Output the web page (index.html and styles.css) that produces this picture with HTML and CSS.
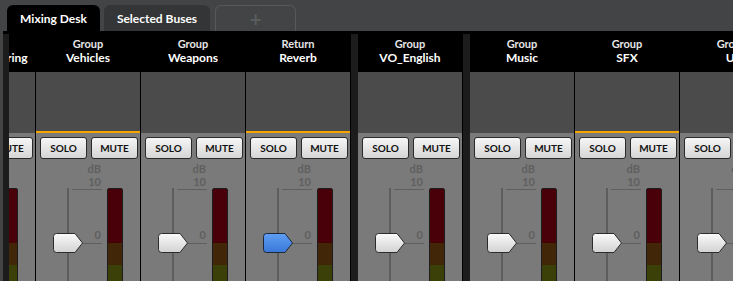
FILE: index.html
```html
<!DOCTYPE html>
<html lang="en">
<head>
    <meta charset="UTF-8">
    <title>Mixing Desk</title>
    <link rel="stylesheet" href="styles.css">
</head>
<body>
    <svg class="svg-defs" width="0" height="0" aria-hidden="true">
        <defs>
            <linearGradient id="knobWhite" x1="0" y1="0" x2="0" y2="1">
                <stop offset="0" stop-color="#fafafa"/>
                <stop offset="1" stop-color="#d2d2d2"/>
            </linearGradient>
            <linearGradient id="knobBlue" x1="0" y1="0" x2="0" y2="1">
                <stop offset="0" stop-color="#5e9ef4"/>
                <stop offset="1" stop-color="#3a78d8"/>
            </linearGradient>
        </defs>
    </svg>

    <nav class="tabs">
        <div class="tab tab-active">Mixing Desk</div>
        <div class="tab tab-buses">Selected Buses</div>
        <div class="tab tab-add">+</div>
    </nav>

    <div class="desk">
        <div class="gutter"></div>
        <div class="viewport">
            <div class="channels">

                <div class="group">
                    <div class="strip">
                        <div class="strip-head"><span class="strip-type">Group</span><span class="strip-name">Crowd_Cheering</span></div>
                        <div class="strip-well"></div>
                        <div class="strip-body">
                            <div class="buttons"><button class="btn">SOLO</button><button class="btn">MUTE</button></div>
                            <div class="fader">
                                <div class="scale-labels">dB<br>10</div>
                                <div class="fader-track">
                                    <span class="tick tick-top"></span>
                                    <span class="tick tick-zero"></span>
                                    <span class="zero-label">0</span>
                                    <svg class="handle" viewBox="0 0 32 22"><path d="M4.5 1.5H23L30.5 11L23 20.5H4.5Q1.5 20.5 1.5 17.5V4.5Q1.5 1.5 4.5 1.5Z" fill="url(#knobWhite)" stroke="#2c2c2c"/></svg>
                                </div>
                                <div class="meter"></div>
                            </div>
                        </div>
                    </div>
                    <div class="strip selected">
                        <div class="strip-head"><span class="strip-type">Group</span><span class="strip-name">Vehicles</span></div>
                        <div class="strip-well"></div>
                        <div class="strip-body">
                            <div class="buttons"><button class="btn">SOLO</button><button class="btn">MUTE</button></div>
                            <div class="fader">
                                <div class="scale-labels">dB<br>10</div>
                                <div class="fader-track">
                                    <span class="tick tick-top"></span>
                                    <span class="tick tick-zero"></span>
                                    <span class="zero-label">0</span>
                                    <svg class="handle" viewBox="0 0 32 22"><path d="M4.5 1.5H23L30.5 11L23 20.5H4.5Q1.5 20.5 1.5 17.5V4.5Q1.5 1.5 4.5 1.5Z" fill="url(#knobWhite)" stroke="#2c2c2c"/></svg>
                                </div>
                                <div class="meter"></div>
                            </div>
                        </div>
                    </div>
                    <div class="strip">
                        <div class="strip-head"><span class="strip-type">Group</span><span class="strip-name">Weapons</span></div>
                        <div class="strip-well"></div>
                        <div class="strip-body">
                            <div class="buttons"><button class="btn">SOLO</button><button class="btn">MUTE</button></div>
                            <div class="fader">
                                <div class="scale-labels">dB<br>10</div>
                                <div class="fader-track">
                                    <span class="tick tick-top"></span>
                                    <span class="tick tick-zero"></span>
                                    <span class="zero-label">0</span>
                                    <svg class="handle" viewBox="0 0 32 22"><path d="M4.5 1.5H23L30.5 11L23 20.5H4.5Q1.5 20.5 1.5 17.5V4.5Q1.5 1.5 4.5 1.5Z" fill="url(#knobWhite)" stroke="#2c2c2c"/></svg>
                                </div>
                                <div class="meter"></div>
                            </div>
                        </div>
                    </div>
                    <div class="strip selected">
                        <div class="strip-head"><span class="strip-type">Return</span><span class="strip-name">Reverb</span></div>
                        <div class="strip-well"></div>
                        <div class="strip-body">
                            <div class="buttons"><button class="btn">SOLO</button><button class="btn">MUTE</button></div>
                            <div class="fader">
                                <div class="scale-labels">dB<br>10</div>
                                <div class="fader-track">
                                    <span class="tick tick-top"></span>
                                    <span class="tick tick-zero"></span>
                                    <span class="zero-label">0</span>
                                    <svg class="handle" viewBox="0 0 32 22"><path d="M4.5 1.5H23L30.5 11L23 20.5H4.5Q1.5 20.5 1.5 17.5V4.5Q1.5 1.5 4.5 1.5Z" fill="url(#knobBlue)" stroke="#1e2836"/></svg>
                                </div>
                                <div class="meter"></div>
                            </div>
                        </div>
                    </div>
                </div>

                <div class="group-gap"></div>

                <div class="group">
                    <div class="strip">
                        <div class="strip-head"><span class="strip-type">Group</span><span class="strip-name">VO_English</span></div>
                        <div class="strip-well"></div>
                        <div class="strip-body">
                            <div class="buttons"><button class="btn">SOLO</button><button class="btn">MUTE</button></div>
                            <div class="fader">
                                <div class="scale-labels">dB<br>10</div>
                                <div class="fader-track">
                                    <span class="tick tick-top"></span>
                                    <span class="tick tick-zero"></span>
                                    <span class="zero-label">0</span>
                                    <svg class="handle" viewBox="0 0 32 22"><path d="M4.5 1.5H23L30.5 11L23 20.5H4.5Q1.5 20.5 1.5 17.5V4.5Q1.5 1.5 4.5 1.5Z" fill="url(#knobWhite)" stroke="#2c2c2c"/></svg>
                                </div>
                                <div class="meter"></div>
                            </div>
                        </div>
                    </div>
                </div>

                <div class="group-gap"></div>

                <div class="group">
                    <div class="strip">
                        <div class="strip-head"><span class="strip-type">Group</span><span class="strip-name">Music</span></div>
                        <div class="strip-well"></div>
                        <div class="strip-body">
                            <div class="buttons"><button class="btn">SOLO</button><button class="btn">MUTE</button></div>
                            <div class="fader">
                                <div class="scale-labels">dB<br>10</div>
                                <div class="fader-track">
                                    <span class="tick tick-top"></span>
                                    <span class="tick tick-zero"></span>
                                    <span class="zero-label">0</span>
                                    <svg class="handle" viewBox="0 0 32 22"><path d="M4.5 1.5H23L30.5 11L23 20.5H4.5Q1.5 20.5 1.5 17.5V4.5Q1.5 1.5 4.5 1.5Z" fill="url(#knobWhite)" stroke="#2c2c2c"/></svg>
                                </div>
                                <div class="meter"></div>
                            </div>
                        </div>
                    </div>
                    <div class="strip selected">
                        <div class="strip-head"><span class="strip-type">Group</span><span class="strip-name">SFX</span></div>
                        <div class="strip-well"></div>
                        <div class="strip-body">
                            <div class="buttons"><button class="btn">SOLO</button><button class="btn">MUTE</button></div>
                            <div class="fader">
                                <div class="scale-labels">dB<br>10</div>
                                <div class="fader-track">
                                    <span class="tick tick-top"></span>
                                    <span class="tick tick-zero"></span>
                                    <span class="zero-label">0</span>
                                    <svg class="handle" viewBox="0 0 32 22"><path d="M4.5 1.5H23L30.5 11L23 20.5H4.5Q1.5 20.5 1.5 17.5V4.5Q1.5 1.5 4.5 1.5Z" fill="url(#knobWhite)" stroke="#2c2c2c"/></svg>
                                </div>
                                <div class="meter"></div>
                            </div>
                        </div>
                    </div>
                    <div class="strip">
                        <div class="strip-head"><span class="strip-type">Group</span><span class="strip-name">UI</span></div>
                        <div class="strip-well"></div>
                        <div class="strip-body">
                            <div class="buttons"><button class="btn">SOLO</button><button class="btn">MUTE</button></div>
                            <div class="fader">
                                <div class="scale-labels">dB<br>10</div>
                                <div class="fader-track">
                                    <span class="tick tick-top"></span>
                                    <span class="tick tick-zero"></span>
                                    <span class="zero-label">0</span>
                                    <svg class="handle" viewBox="0 0 32 22"><path d="M4.5 1.5H23L30.5 11L23 20.5H4.5Q1.5 20.5 1.5 17.5V4.5Q1.5 1.5 4.5 1.5Z" fill="url(#knobWhite)" stroke="#2c2c2c"/></svg>
                                </div>
                                <div class="meter"></div>
                            </div>
                        </div>
                    </div>
                </div>

            </div>
        </div>
    </div>
</body>
</html>
```

FILE: styles.css
```css
:root {
    --page: #424445;
    --gap: #1c1c1c;
    --well: #4b4b4b;
    --body: #7a7a7a;
    --scale: #5f5f5f;
    --accent: #f5a400;
}

* {
    box-sizing: border-box;
    margin: 0;
    padding: 0;
}

body {
    background: var(--page);
    font-family: Lato, "Open Sans", sans-serif;
    width: 733px;
    height: 281px;
    overflow: hidden;
}

.svg-defs {
    display: block;
    width: 0;
    height: 0;
}

/* tab bar */
.tabs {
    display: flex;
    gap: 4px;
    height: 31px;
    padding: 5px 0 0 7px;
}

.tab {
    display: flex;
    align-items: center;
    justify-content: center;
    height: 26px;
    border-radius: 6px 6px 0 0;
    color: #fff;
    font-size: 12px;
    font-weight: 700;
}

.tab-active {
    width: 93px;
    background: #000;
}

.tab-buses {
    width: 106px;
    background: #333536;
}

.tab-add {
    width: 81px;
    margin-left: 1px;
    border: 1px solid #56585a;
    border-bottom: none;
    color: #5a5c5e;
    font-size: 20px;
}

/* desk */
.desk {
    display: flex;
    height: 250px;
    margin-left: 3px;
    background: #000;
}

.gutter,
.group-gap {
    flex: none;
    margin-top: 3px;
    background: var(--gap);
}

.gutter {
    width: 6px;
}

.group-gap {
    width: 7px;
}

.viewport {
    flex: 1;
    overflow: hidden;
}

.channels {
    display: flex;
    height: 100%;
    margin-left: -78px;
}

.group {
    display: flex;
}

.strip {
    display: flex;
    flex-direction: column;
    flex: none;
    width: 105px;
    border-right: 1px solid #000;
}

.strip-head {
    flex: none;
    height: 41px;
    padding-top: 6px;
    text-align: center;
    font-weight: 700;
    white-space: nowrap;
}

.strip-type {
    display: block;
    color: #e6e6e6;
    font-size: 11px;
    line-height: 13px;
}

.strip-name {
    display: block;
    color: #fff;
    font-size: 12px;
    line-height: 16px;
}

.strip-well {
    flex: none;
    height: 61px;
    background: var(--well);
}

.strip.selected .strip-well {
    border-bottom: 2px solid var(--accent);
}

.strip-body {
    flex: 1;
    min-height: 0;
    overflow: hidden;
    background: var(--body);
}

.buttons {
    display: flex;
    gap: 4px;
    margin: 4px 0 0 4px;
}

.btn {
    width: 47px;
    height: 22px;
    border: 1px solid #2a2a2a;
    border-radius: 3px;
    background: linear-gradient(#f6f6f6, #d5d5d5);
    color: #111;
    font-family: Lato, "Open Sans", sans-serif;
    font-size: 10px;
    font-weight: 700;
}

/* fader + meter */
.fader {
    display: grid;
    grid-template-columns: 66px 16px;
    column-gap: 5px;
    margin-top: 3px;
}

.scale-labels {
    grid-column: 1;
    padding-right: 1px;
    text-align: right;
    color: var(--scale);
    font-size: 11px;
    font-weight: 700;
    line-height: 13px;
}

.fader-track {
    grid-column: 1;
    grid-row: 2;
    position: relative;
    height: 110px;
    background: linear-gradient(#5d5d5d, #5d5d5d) 31px 0 / 2px 100% no-repeat;
}

.tick {
    position: absolute;
    left: 36px;
    width: 30px;
    height: 1px;
    background: var(--scale);
}

.tick-top {
    top: 1px;
}

.tick-zero {
    top: 55px;
}

.zero-label {
    position: absolute;
    top: 41px;
    right: 1px;
    color: var(--scale);
    font-size: 11px;
    font-weight: 700;
    line-height: 11px;
}

.handle {
    position: absolute;
    top: 44px;
    left: 16px;
    width: 32px;
    height: 22px;
}

.meter {
    grid-column: 2;
    grid-row: 2;
    height: 110px;
    border: 1px solid #1c1c1c;
    border-radius: 2px;
    background: linear-gradient(#4a0008 0 54px, #412708 54px 76px, #3a4007 76px);
}
```
